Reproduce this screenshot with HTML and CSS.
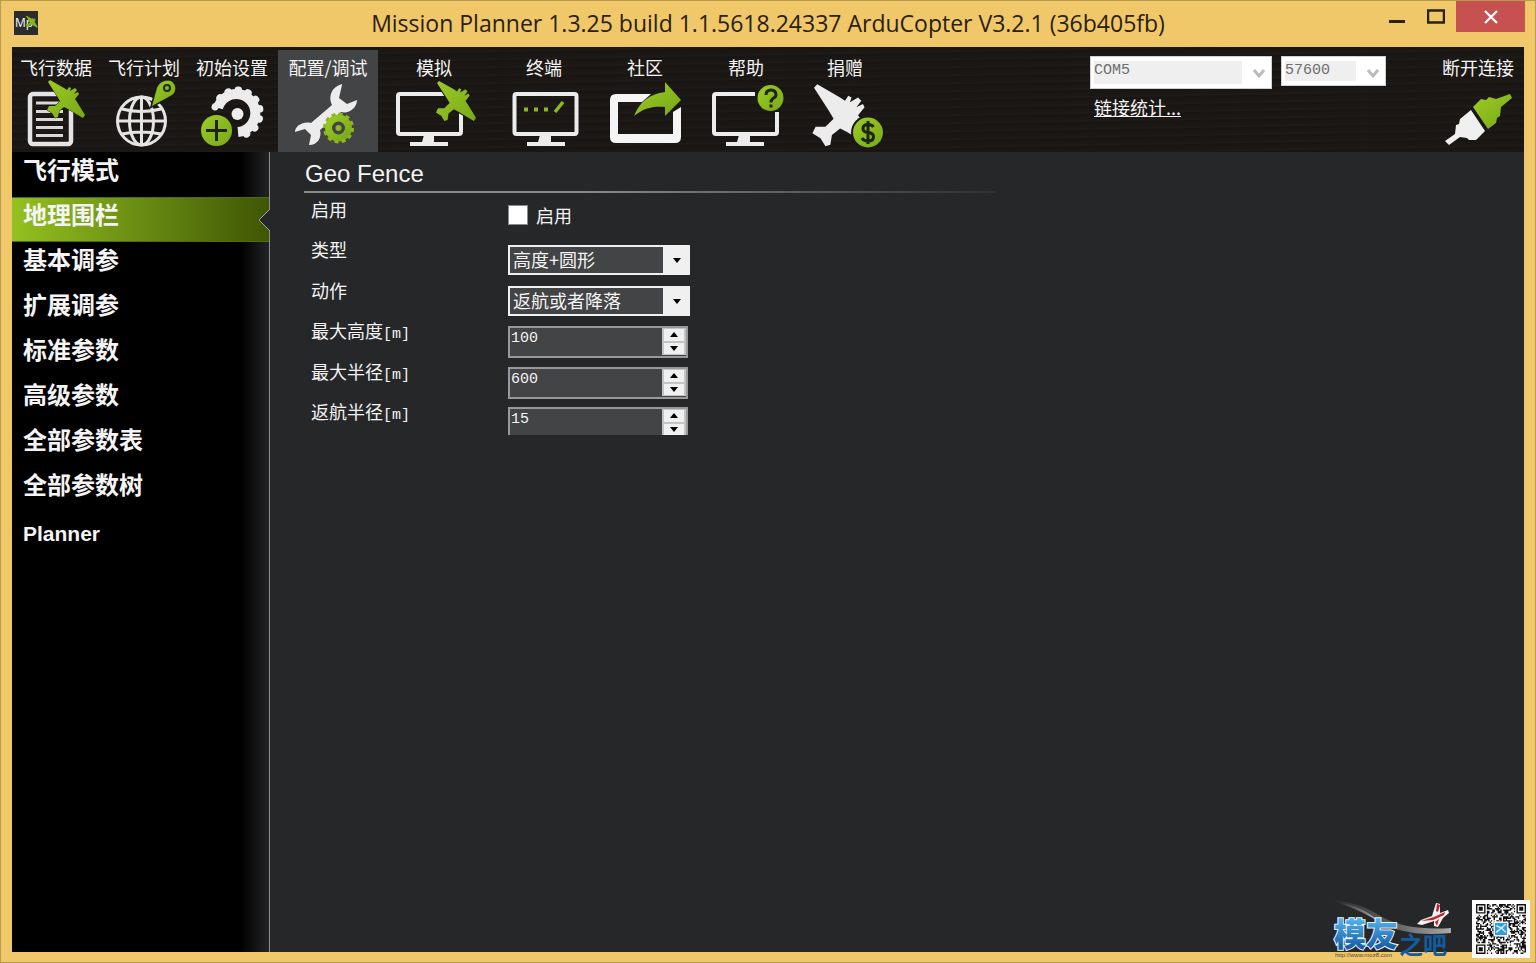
FILE: index.html
```
<!DOCTYPE html>
<html lang="zh-CN">
<head>
<meta charset="utf-8">
<title>Mission Planner</title>
<link rel="stylesheet" href="styles.css">
</head>
<body>
<svg class="defs" aria-hidden="true">
  <defs>
    <linearGradient id="green" x1="0" y1="0" x2="1" y2="1"><stop offset="0" stop-color="#9ccb25"/><stop offset="1" stop-color="#78a818"/></linearGradient>
    <linearGradient id="blue" x1="0" y1="0" x2="0" y2="1"><stop offset="0" stop-color="#58b8f0"/><stop offset="1" stop-color="#0b4e9c"/></linearGradient>
    <linearGradient id="swoosh"><stop offset="0" stop-color="#fff" stop-opacity="0"/><stop offset=".5" stop-color="#fff" stop-opacity=".25"/><stop offset="1" stop-color="#fff" stop-opacity=".6"/></linearGradient>
    <symbol id="plane" viewBox="0 0 38 38" overflow="visible">
      <path d="M0 1L2 -1L16 7L19 9L21 6L23 7L22 10L27 7L29 9L26 13L30 11L31 13L27 18L29 21L37 34L35 37L20 28L16 26L11 30L10 36L7 37L4 32L-1 29L1 25L7 25L12 20L9 15Z" stroke-linejoin="round"/>
    </symbol>
  </defs>
</svg>
<div class="window">
  <header class="titlebar">
    <svg class="app-icon" viewBox="0 0 24 24" role="img" aria-label="Mission Planner"><rect width="24" height="24" fill="#2b2b2b"/><text x="1" y="16" class="app-m">Mp</text><use href="#plane" x="12" y="3" width="12" height="16" fill="#83b51c"/></svg>
    <h1 class="title">Mission Planner 1.3.25 build 1.1.5618.24337 ArduCopter V3.2.1 (36b405fb)</h1>
    <div class="window-buttons">
      <button class="win-btn" aria-label="Minimize"><svg width="16" height="30" viewBox="0 0 16 30"><path d="M0 20.500H16" stroke="#2a2010" stroke-width="3"/></svg></button>
      <button class="win-btn" aria-label="Maximize"><svg width="18" height="30" viewBox="0 0 18 30"><rect x="1" y="9.500" width="16" height="12" fill="none" stroke="#2a2010" stroke-width="2.500"/></svg></button>
      <button class="win-btn close" aria-label="Close"><svg width="14" height="14" viewBox="0 0 14 14"><path d="M1 1L13 13M13 1L1 13" stroke="#fff" stroke-width="2.300"/></svg></button>
    </div>
  </header>
  <div class="client">
    <nav class="toolbar">
      <button class="tool"><span class="tool-label">飞行数据</span>
        <svg class="tool-icon" viewBox="12 80 88 70"><rect x="30" y="94" width="41" height="50" rx="3" fill="none" stroke="#e4e4e4" stroke-width="4.500"/><path d="M36 103H63M36 111.500H63M36 119.500H63M36 127.500H63M36 135.500H63" stroke="#d8d8d8" stroke-width="3"/><use href="#plane" x="48" y="81" width="38" height="38" fill="url(#green)" stroke="#1a1715" stroke-width="1" paint-order="stroke"/></svg></button>
      <button class="tool"><span class="tool-label">飞行计划</span>
        <svg class="tool-icon" viewBox="100 80 88 70"><g fill="none" stroke="#e4e4e4" stroke-width="3"><circle cx="141.500" cy="121" r="24"/><ellipse cx="141.500" cy="121" rx="12" ry="24"/><path d="M141.500 97V145M118 121H165M122 109Q141 114 161 109M122 134Q141 130 161 134"/></g><path d="M152 106L157 88C159 82 166 79 171 81C176 84 177 91 172 95Z" fill="url(#green)" stroke="#1a1715" stroke-width="3" paint-order="stroke"/><circle cx="167" cy="88" r="3" fill="none" stroke="#222b10" stroke-width="2"/></svg></button>
      <button class="tool"><span class="tool-label">初始设置</span>
        <svg class="tool-icon" viewBox="188 80 88 70"><g fill="none" stroke="#ececec"><path d="M218 108A19 19 0 1 1 238 132" stroke-width="10"/><path d="M215 107A23 23 0 1 1 239 136" stroke-width="7" stroke-dasharray="0.500 9.700" stroke-linecap="round"/></g><circle cx="237.500" cy="114" r="6" fill="#eee"/><circle cx="216.500" cy="130.500" r="15.500" fill="url(#green)"/><path d="M206 130.500H227M216.500 120V141" stroke="#1d2410" stroke-width="3"/></svg></button>
      <button class="tool config active"><span class="tool-label">配置/调试</span>
        <svg class="tool-icon" viewBox="278 80 100 70"><path d="M342 84C331 87 328 97 332 105L311 123C303 121 295 126 295 132L305 129L311 135L309 145C318 145 322 137 320 130L341 112C349 114 357 108 357 100L347 104L339 98L342 85Z" fill="#ececec"/><circle cx="338.500" cy="128" r="10" fill="none" stroke="url(#green)" stroke-width="7"/><circle cx="338.500" cy="128" r="14" fill="none" stroke="#8aba20" stroke-width="3" stroke-dasharray="4 3.300"/><circle cx="338.500" cy="128" r="3" fill="#8aba20"/></svg></button>
      <button class="tool simulate"><span class="tool-label">模拟</span>
        <svg class="tool-icon" viewBox="378 80 112 70"><rect x="398" y="94" width="63" height="40" rx="2" fill="none" stroke="#ececec" stroke-width="4"/><path d="M424 135H434V142H448V146H410V142H422Z" fill="#ececec"/><use href="#plane" x="437" y="82" width="40" height="40" fill="url(#green)" stroke="#1a1715" stroke-width="2" paint-order="stroke"/></svg></button>
      <button class="tool wide"><span class="tool-label">终端</span>
        <svg class="tool-icon" viewBox="490 80 108 70"><rect x="514.500" y="94" width="62" height="40" rx="2" fill="none" stroke="#ececec" stroke-width="4"/><path d="M540 135H551V142H565V146H527V142H538Z" fill="#ececec"/><path d="M524 109.500H528M534 109.500H538M544 109.500H548" stroke="#8aba20" stroke-width="4"/><path d="M555 112L563 102" stroke="#8aba20" stroke-width="3.500"/></svg></button>
      <button class="tool community"><span class="tool-label">社区</span>
        <svg class="tool-icon" viewBox="598 80 94 70"><path d="M651 94H616Q610 94 610 100V137Q610 143 616 143H675Q681 143 681 137V107L673 112V134H618V102H642Z" fill="#f5f5f5"/><path d="M634 116C640 101 650 94 665 92V82L681 100L665 116V107C653 106 644 108 634 116Z" fill="url(#green)"/></svg></button>
      <button class="tool wide"><span class="tool-label">帮助</span>
        <svg class="tool-icon" viewBox="692 80 108 70"><path d="M755 94H716Q714 94 714 96V132Q714 134 716 134H775Q777 134 777 132V112" fill="none" stroke="#ececec" stroke-width="4"/><path d="M739 135H750V142H764V146H726V142H737Z" fill="#ececec"/><circle cx="770.500" cy="98" r="13" fill="url(#green)"/><path d="M766 95Q766 90 771 90Q776 90 776 95Q776 97 773 98.500Q771 100 771 102.500M771 104.500V107.500" fill="none" stroke="#1d2410" stroke-width="3"/></svg></button>
      <button class="tool donate"><span class="tool-label">捐赠</span>
        <svg class="tool-icon" viewBox="800 80 90 70"><use href="#plane" x="814" y="86" width="62" height="62" fill="#ececec"/><circle cx="868" cy="132.500" r="17" fill="#1a1715"/><circle cx="868" cy="132.500" r="15" fill="url(#green)"/><path d="M873.500 127Q872 124.500 868 124.500Q863 124.500 863 128.500Q863 132 868 132.500Q873.500 133 873.500 137Q873.500 141 868 141Q863.500 141 862 138M868 121V144" fill="none" stroke="#1d2410" stroke-width="3"/></svg></button>
      <div class="connection">
        <div class="combos">
          <div class="combo port"><select aria-label="端口" disabled><option>COM5</option></select><svg class="chevron" viewBox="0 0 12 12"><path d="M1 3L6 9L11 3" fill="none" stroke="#bcbcbc" stroke-width="3"/></svg></div>
          <div class="combo baud"><select aria-label="波特率" disabled><option>57600</option></select><svg class="chevron" viewBox="0 0 12 12"><path d="M1 3L6 9L11 3" fill="none" stroke="#bcbcbc" stroke-width="3"/></svg></div>
        </div>
        <a class="stats" href="#stats">链接统计...</a>
      </div>
      <button class="tool plug"><span class="tool-label">断开连接</span>
        <svg class="tool-icon" viewBox="1432 80 92 70"><path d="M1445 141L1455 134L1456 125L1459 124L1460 119L1471 110L1485 131L1476 140H1469L1467 138L1460 137L1449 145Z" fill="#f0f0f0"/><path d="M1473 107L1481 99L1486 100L1489 97L1496 99L1510 94L1512 98L1501 107L1500 116L1497 118L1496 123L1488 129Z" fill="url(#green)"/></svg></button>
    </nav>
    <div class="body">
      <nav class="sidebar">
        <a class="side-item" href="#modes">飞行模式</a>
        <a class="side-item current" href="#fence" aria-current="page">地理围栏<svg class="notch" viewBox="0 0 12 22"><path d="M12 0L1 11L12 22" fill="#262729" stroke="#a0a0a0"/></svg></a>
        <a class="side-item" href="#basic">基本调参</a>
        <a class="side-item" href="#extended">扩展调参</a>
        <a class="side-item" href="#standard">标准参数</a>
        <a class="side-item" href="#advanced">高级参数</a>
        <a class="side-item" href="#list">全部参数表</a>
        <a class="side-item" href="#tree">全部参数树</a>
        <a class="side-item latin" href="#planner">Planner</a>
      </nav>
      <main class="panel">
        <h2 class="panel-title">Geo Fence</h2>
        <div class="form">
          <div class="row"><span class="label">启用</span><label class="check"><input type="checkbox">启用</label></div>
          <div class="row"><label class="label" for="type">类型</label><div class="dropdown"><select id="type"><option>高度+圆形</option></select></div></div>
          <div class="row"><label class="label" for="action">动作</label><div class="dropdown"><select id="action"><option>返航或者降落</option></select></div></div>
          <div class="row"><label class="label" for="alt">最大高度<span class="unit">[m]</span></label><div class="spinner"><input id="alt" type="number" value="100"><div class="steps"><button class="up" aria-label="增加"></button><button class="down" aria-label="减少"></button></div></div></div>
          <div class="row"><label class="label" for="rad">最大半径<span class="unit">[m]</span></label><div class="spinner"><input id="rad" type="number" value="600"><div class="steps"><button class="up" aria-label="增加"></button><button class="down" aria-label="减少"></button></div></div></div>
          <div class="row"><label class="label" for="rtl">返航半径<span class="unit">[m]</span></label><div class="spinner cut"><input id="rtl" type="number" value="15"><div class="steps"><button class="up" aria-label="增加"></button><button class="down" aria-label="减少"></button></div></div></div>
        </div>
      </main>
    </div>
  </div>
  <div class="watermark">
    <svg class="brand" viewBox="1330 898 124 62">
      <path d="M1330 900Q1360 902 1382 917Q1408 931 1451 928L1451 933Q1405 938 1376 920Q1356 906 1330 900Z" fill="url(#swoosh)"/>
      <path d="M1336 902Q1364 906 1382 924Q1365 912 1336 902Z" fill="url(#swoosh)"/>
      <path d="M1417 924L1421 920L1432 916L1436 903L1440 904L1440 913L1448 910L1449 913L1443 918L1438 927L1434 926L1434 921L1422 925Z" fill="#f2f2f2"/>
      <path d="M1421 921L1434 917L1445 912L1444 915L1433 920ZM1437 904L1440 905L1438 912L1436 911ZM1435 922L1439 919L1437 926Z" fill="#c5202a"/>
      <text x="1334" y="946" class="brand-big">模友</text>
      <text x="1399" y="954" class="brand-small">之吧</text>
      <text x="1335" y="957" class="brand-url">http://www.moz8.com</text>
    </svg>
    <svg class="qr" viewBox="-3 -3 43 43" role="img" aria-label="QR"><rect x="-3" y="-3" width="43" height="43" fill="#fff"/><path class="qr-cells" fill="#111"/><rect x="13" y="13" width="11" height="11" fill="#fff"/><rect x="14" y="14" width="9" height="9" fill="#2d9fe0"/><path d="M15 21L22 15M15 16L19 18L22 21" stroke="#d9f0fc" fill="none"/></svg>
  </div>
</div>
<script src="qr.js"></script>
</body>
</html>
```
FILE: qr.js
```
const N = 37;
let seed = 20150525;
function next() {
  seed = (seed * 1103515245 + 12345) % 2147483648;
  return seed / 2147483648;
}
function finder(x, y) {
  for (const [fx, fy] of [[0, 0], [N - 7, 0], [0, N - 7]]) {
    const dx = x - fx, dy = y - fy;
    if (dx >= -1 && dx <= 7 && dy >= -1 && dy <= 7) {
      const ring = Math.max(Math.abs(dx - 3), Math.abs(dy - 3));
      return ring === 3 || ring <= 1;
    }
  }
  return null;
}
let d = "";
for (let y = 0; y < N; y++) {
  for (let x = 0; x < N; x++) {
    const random = next() < 0.5;
    const fixed = finder(x, y);
    if (fixed === null ? random : fixed) d += `M${x} ${y}h1v1h-1z`;
  }
}
document.querySelector(".qr-cells").setAttribute("d", d);
```
FILE: styles.css
```
* { box-sizing: border-box; }
body {
  margin: 0;
  font-family: "Noto Sans CJK SC", sans-serif;
  font-size: 18px;
  color: #f4f4f4;
}
button { font: inherit; color: inherit; border: 0; padding: 0; background: none; }
a { color: inherit; }
.defs { position: absolute; width: 0; height: 0; }
.window {
  position: relative;
  display: flex;
  flex-direction: column;
  min-height: 100vh;
  padding: 0 11px 10px;
  background: #f0c869;
  border: 1px solid #b99a51;
}
.titlebar { display: grid; grid-template-columns: 1fr auto 1fr; height: 46px; }
.app-icon { width: 24px; height: 24px; margin: 10px 0 0 2px; }
.app-m { font: 12px "Open Sans", sans-serif; fill: #fff; }
.title {
  margin: 0;
  font: 400 23px/45px "Open Sans", sans-serif;
  color: #2a2010;
}
.window-buttons { display: flex; justify-content: flex-end; gap: 22px; align-items: flex-start; }
.win-btn { display: flex; height: 30px; }
.win-btn.close {
  width: 69px;
  height: 31px;
  margin-left: -11px;
  margin-right: -1px;
  align-items: center;
  justify-content: center;
  background: #c75050;
}
.client { flex: 1; display: flex; flex-direction: column; background: #262729; }
.toolbar {
  display: flex;
  height: 105px;
  padding-top: 3px;
  background: repeating-linear-gradient(179deg, #1a1715 0 3px, #1e1a17 4px 5px, #181513 6px 8px);
}
.tool { display: flex; flex-direction: column; align-items: center; width: 88px; padding-top: 6px; }
.tool-label { height: 24px; line-height: 23px; white-space: nowrap; }
.tool-icon { display: block; width: 100%; height: 70px; }
.tool.config { width: 100px; margin-left: 2px; }
.tool.active { background: #434446; }
.tool.simulate { width: 112px; }
.tool.wide { width: 108px; }
.tool.community { width: 94px; }
.tool.donate { width: 90px; }
.tool.plug { width: 92px; }
.connection { margin-left: auto; margin-right: 46px; padding-top: 6px; }
.combos { display: flex; align-items: flex-start; gap: 9px; height: 39px; }
.combo { position: relative; background: #fff; border: 1px solid #d0d0d0; }
.combo select {
  display: block;
  appearance: none;
  width: 100%;
  height: 100%;
  padding: 0 0 4px;
  border: 0;
  background: #efefef;
  color: #6d6d6d;
  opacity: 1;
  font: 15px/18px "Liberation Mono", monospace;
}
.combo.port { width: 182px; height: 33px; padding: 4px 29px 4px 3px; }
.combo.baud { width: 105px; height: 30px; padding: 4px 29px 4px 3px; }
.combo.baud select { padding-bottom: 1px; }
.chevron { position: absolute; right: 6px; top: 10px; width: 12px; height: 12px; }
.stats { display: block; margin-left: 4px; line-height: 24px; }
.body { flex: 1; display: flex; }
.sidebar {
  width: 258px;
  border-right: 1px solid #8c8d8f;
  background: linear-gradient(to left, #232425, #000 28px);
}
.side-item {
  position: relative;
  display: block;
  height: 45px;
  padding-left: 11px;
  font-size: 24px;
  font-weight: 700;
  line-height: 34px;
  text-decoration: none;
}
.side-item.current {
  background: linear-gradient(to right, #94c11f, #3f5605);
  border-top: 1px solid #4d6b10;
  border-bottom: 1px solid #4d6b10;
  line-height: 32px;
}
.notch { position: absolute; right: -1px; top: 11px; width: 12px; height: 22px; }
.side-item.latin { font-family: "Liberation Sans", sans-serif; font-size: 21px; line-height: 43px; }
.panel { flex: 1; padding: 8px 34px; }
.panel-title {
  width: 692px;
  margin: 0;
  padding-left: 1px;
  padding-bottom: 4px;
  border-bottom: 2px solid;
  border-image: linear-gradient(to right, #8a8b8c 40%, #2e2f31) 1;
  font: 400 24px/27px "Liberation Sans", sans-serif;
}
.form { padding-left: 7px; }
.row { display: grid; grid-template-columns: 197px 182px; height: 41px; }
.row:nth-child(odd) { height: 40px; }
.label { line-height: 32px; }
.unit { font: 15px "Liberation Mono", monospace; }
.check { display: flex; align-items: center; gap: 8px; height: 44px; }
.check input {
  appearance: none;
  width: 20px;
  height: 20px;
  margin: 0;
  background: #fff;
  border: 1px solid #8a8a8a;
}
.dropdown { position: relative; height: 30px; margin-top: 12px; }
.dropdown select {
  display: block;
  appearance: none;
  width: 182px;
  height: 30px;
  padding: 0 0 2px 3px;
  border: 2px solid #f0f0f0;
  border-radius: 0;
  border-right-width: 27px;
  background: #434446;
  color: #f4f4f4;
  font: 18px/24px "Noto Sans CJK SC", sans-serif;
}
.dropdown::after {
  content: "";
  position: absolute;
  right: 9px;
  top: 13px;
  border: 4px solid transparent;
  border-top: 5px solid #000;
  border-bottom: 0;
  pointer-events: none;
}
.spinner {
  display: flex;
  width: 180px;
  height: 32px;
  margin-top: 12px;
  background: #434446;
  border: 2px solid #98999a;
}
.spinner input {
  flex: 1;
  min-width: 0;
  appearance: textfield;
  height: 22px;
  padding: 0 0 0 1px;
  border: 0;
  background: none;
  color: #f4f4f4;
  font: 15px/22px "Liberation Mono", monospace;
}
.spinner input::-webkit-inner-spin-button { appearance: none; margin: 0; }
.steps { display: flex; flex-direction: column; gap: 2px; width: 24px; height: 27px; padding: 1px 2px; background: #c4c4c4; }
.steps button { display: flex; flex: 1; align-items: center; justify-content: center; background: #f0f0f0; }
.steps button::before { content: ""; border: 4px solid transparent; }
.steps .up::before { border-bottom: 5px solid #000; border-top: 0; }
.steps .down::before { border-top: 5px solid #000; border-bottom: 0; }
.spinner.cut { height: 28px; overflow: hidden; border-bottom: 0; }
.watermark { position: absolute; right: 5px; bottom: 4px; display: flex; align-items: flex-end; gap: 18px; }
.brand { width: 124px; height: 62px; margin-bottom: -2px; }
.brand-big { font: 900 32px "Liberation Sans", "Noto Sans CJK SC", sans-serif; fill: url(#blue); stroke: #e6f5ff; stroke-width: 2px; paint-order: stroke; }
.brand-small { font: 700 24px "Liberation Sans", "Noto Sans CJK SC", sans-serif; fill: #125c9e; }
.brand-url { font: 6px "Liberation Sans", sans-serif; fill: #4f4a3a; }
.qr { width: 58px; height: 58px; }
```
